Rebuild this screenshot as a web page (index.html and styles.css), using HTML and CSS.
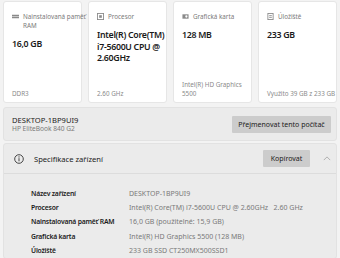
FILE: index.html
```html
<!DOCTYPE html>
<html lang="cs">
<head>
    <meta charset="UTF-8">
    <title>Informace o zařízení</title>
    <link rel="stylesheet" href="styles.css">
</head>
<body>
    <div class="cards">
        <div class="card">
            <div class="card-label">
                <svg class="ico" viewBox="0 0 8 8"><rect x="0" y="2" width="8" height="4" fill="#8a8a8a"/><line x1="0" y1="4" x2="8" y2="4" stroke="#fff" stroke-width="0.6"/></svg>
                <span><span class="nw">Nainstalovaná paměť</span> RAM</span>
            </div>
            <div class="card-value">16,0 GB</div>
            <div class="card-foot">DDR3</div>
        </div>
        <div class="card">
            <div class="card-label">
                <svg class="ico" viewBox="0 0 8 8"><rect x="0.5" y="0.5" width="7" height="7" fill="none" stroke="#8a8a8a"/><rect x="2.5" y="2.5" width="3" height="3" fill="#8a8a8a"/></svg>
                <span>Procesor</span>
            </div>
            <div class="card-value"><span class="nw">Intel(R) Core(TM)</span> <span class="nw">i7-5600U CPU @</span> 2.60GHz</div>
            <div class="card-foot">2.60 GHz</div>
        </div>
        <div class="card">
            <div class="card-label">
                <svg class="ico" viewBox="0 0 8 8"><rect x="0.5" y="1.5" width="7" height="5" fill="#8a8a8a"/><circle cx="5" cy="4" r="1.3" fill="#fff"/></svg>
                <span>Grafická karta</span>
            </div>
            <div class="card-value">128 MB</div>
            <div class="card-foot">Intel(R) HD Graphics 5500</div>
        </div>
        <div class="card">
            <div class="card-label">
                <svg class="ico" viewBox="0 0 8 8"><rect x="1" y="0.5" width="6" height="7" fill="none" stroke="#8a8a8a"/><line x1="2.5" y1="3" x2="5.5" y2="3" stroke="#8a8a8a"/><line x1="2.5" y1="5" x2="5.5" y2="5" stroke="#8a8a8a"/></svg>
                <span>Úložiště</span>
            </div>
            <div class="card-value">233 GB</div>
            <div class="card-foot nw">Využito 39 GB z 233 GB</div>
        </div>
    </div>

    <div class="panel device">
        <div class="device-name">
            <div class="name">DESKTOP-1BP9UI9</div>
            <div class="model">HP EliteBook 840 G2</div>
        </div>
        <button class="btn">Přejmenovat tento počítač</button>
    </div>

    <div class="panel specs">
        <div class="specs-head">
            <svg class="info" viewBox="0 0 10 10"><circle cx="5" cy="5" r="4.3" fill="none" stroke="#333" stroke-width="0.9"/><line x1="5" y1="4.2" x2="5" y2="7.3" stroke="#333" stroke-width="0.9"/><circle cx="5" cy="2.9" r="0.55" fill="#333"/></svg>
            <span class="specs-title">Specifikace zařízení</span>
            <button class="btn">Kopírovat</button>
            <svg class="chev" viewBox="0 0 10 6"><polyline points="1,5 5,1 9,5" fill="none" stroke="#999" stroke-width="0.9"/></svg>
        </div>
        <div class="specs-body">
            <div class="row"><div class="key">Název zařízení</div><div class="val">DESKTOP-1BP9UI9</div></div>
            <div class="row"><div class="key">Procesor</div><div class="val">Intel(R) Core(TM) i7-5600U CPU @ 2.60GHz&nbsp;&nbsp;&nbsp;2.60 GHz</div></div>
            <div class="row"><div class="key">Nainstalovaná paměť RAM</div><div class="val">16,0 GB (použitelné: 15,9 GB)</div></div>
            <div class="row"><div class="key">Grafická karta</div><div class="val">Intel(R) HD Graphics 5500 (128 MB)</div></div>
            <div class="row"><div class="key">Úložiště</div><div class="val">233 GB SSD CT250MX500SSD1</div></div>
        </div>
    </div>
</body>
</html>
```

FILE: styles.css
```css
body {
	margin: 0;
	padding: 1px 3px 0;
	background: #f3f3f3;
	font-family: "Noto Sans", "Open Sans", sans-serif;
	color: #1b1b1b;
	overflow: hidden;
}

.nw {
	white-space: nowrap;
}

.cards {
	display: grid;
	grid-template-columns: repeat(4, minmax(0, 1fr));
	gap: 6px;
}

.card {
	height: 102px;
	box-sizing: border-box;
	padding: 10px 2px 4px 8px;
	background: #fff;
	border: 1px solid #e6e6e6;
	border-radius: 3px;
	display: flex;
	flex-direction: column;
	min-width: 0;
}

.card-label {
	display: flex;
	align-items: flex-start;
	gap: 4px;
	font-size: 6.3px;
	line-height: 9px;
	color: #7a7a7a;
}

.card-label .ico {
	width: 7px;
	height: 7px;
	flex: none;
	margin-top: 1px;
}

.card-value {
	margin-top: 9px;
	font-size: 8.8px;
	line-height: 11.5px;
	letter-spacing: -0.3px;
	font-weight: 600;
	color: #1a1a1a;
}

.card-foot {
	margin-top: auto;
	font-size: 6.3px;
	line-height: 9px;
	color: #8a8a8a;
}

.panel {
	background: #ebebeb;
	border: 1px solid #e2e2e2;
	border-radius: 3px;
}

.device {
	margin-top: 4px;
	height: 34px;
	box-sizing: border-box;
	display: flex;
	align-items: center;
	justify-content: space-between;
	padding: 0 5px 0 8px;
}

.device-name .name {
	font-size: 7.6px;
	line-height: 10px;
	color: #1b1b1b;
}

.device-name .model {
	font-size: 6.6px;
	line-height: 8px;
	color: #7a7a7a;
}

.btn {
	font-family: inherit;
	font-size: 7px;
	color: #1b1b1b;
	background: #cccccc;
	border: none;
	border-radius: 1px;
	padding: 0;
	height: 17px;
	white-space: nowrap;
}

.device .btn {
	width: 99px;
}

.specs {
	margin-top: 2px;
}

.specs-head {
	display: flex;
	align-items: center;
	height: 29px;
	padding: 0 5px 0 10px;
	border-bottom: 1px solid #dcdcdc;
}

.info {
	width: 10px;
	height: 10px;
	flex: none;
}

.specs-title {
	margin-left: 10px;
	font-size: 7.6px;
	flex: 1;
}

.specs-head .btn {
	width: 47px;
}

.chev {
	width: 8px;
	height: 5px;
	margin-left: 13px;
}

.specs-body {
	padding: 12px 0 0 27px;
}

.row {
	display: flex;
	height: 14.4px;
	align-items: center;
}

.key {
	width: 98px;
	flex: none;
	font-size: 6.8px;
	font-weight: 600;
	letter-spacing: -0.2px;
	color: #1b1b1b;
}

.val {
	font-size: 7px;
	color: #7a7a7a;
	white-space: nowrap;
}
```
